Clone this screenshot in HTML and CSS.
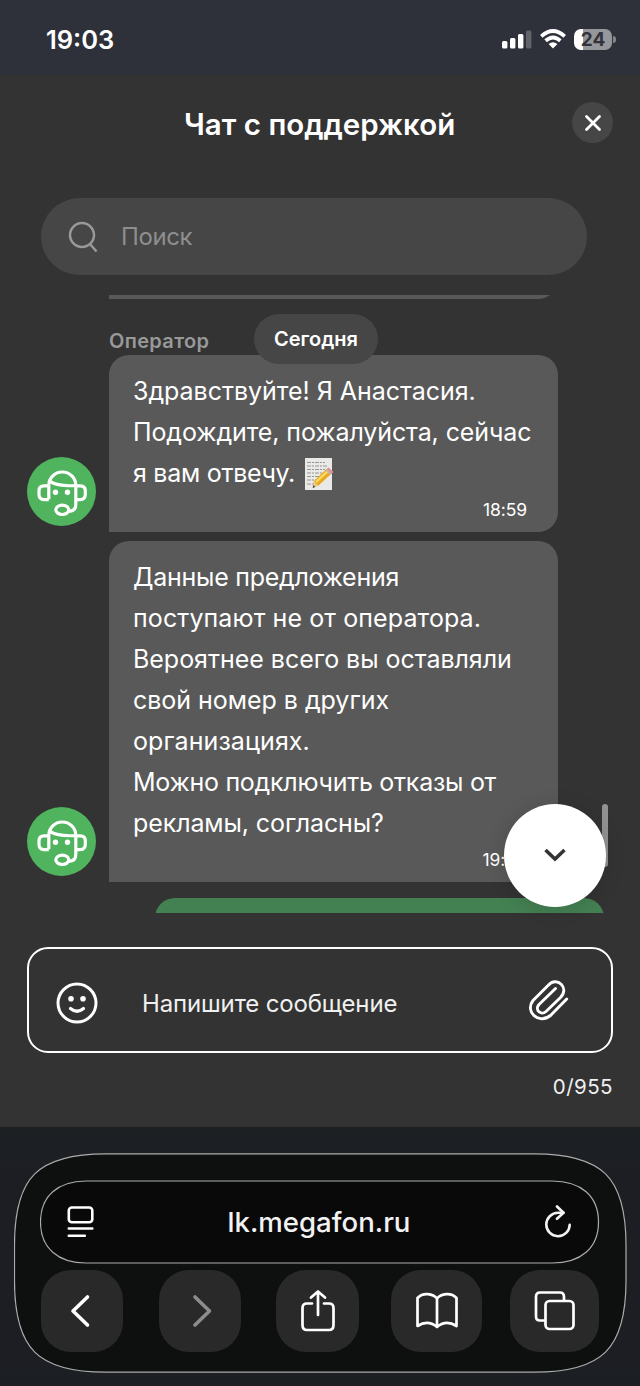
FILE: index.html
```html
<!DOCTYPE html>
<html lang="ru">
<head>
<meta charset="utf-8">
<title>Чат с поддержкой</title>
<link rel="stylesheet" href="styles.css">
</head>
<body>
<svg class="defs" width="0" height="0" aria-hidden="true">
  <symbol id="operator" viewBox="0 0 69 69">
    <circle cx="34.5" cy="34.5" r="34.5" fill="#50b45e"/>
    <g fill="none" stroke="#fff" stroke-width="3.2" stroke-linejoin="round">
      <path d="M21.800 42.300V28.500A13.500 13.500 0 0 1 48.800 28.500V47.500Q48.800 54 42 54.300"/>
      <path d="M22.300 28.800h-5.300q-5 0-5 5v3.800q0 5 5 5h4.800M48.800 28.800h4.500q5 0 5 5v3.800q0 5-5 5h-4.500"/>
      <path d="M23.500 24.700Q31 29.600 48.500 28.600"/>
      <ellipse cx="35.300" cy="52.800" rx="6.500" ry="4.700"/>
    </g>
    <circle cx="28.500" cy="35.300" r="2.700" fill="#fff"/><circle cx="40.500" cy="35.300" r="2.700" fill="#fff"/>
  </symbol>
</svg>
<header class="status">
  <span class="clock">19:03</span>
  <div class="status-icons">
    <svg class="signal" width="30" height="20" viewBox="0 0 30 20"><g fill="#fff"><rect x="0" y="12" width="5.400" height="7.500" rx="1.500"/><rect x="8" y="9" width="5.400" height="10.500" rx="1.500"/><rect x="16" y="5" width="5.400" height="14.500" rx="1.500"/><rect x="24" y="1.500" width="5.400" height="18" rx="1.500" opacity=".25"/></g></svg>
    <svg class="wifi" width="26" height="20" viewBox="0 0 26 20"><g fill="none" stroke="#fff" stroke-width="3.800"><path d="M1.300 7.300Q13-3.300 24.700 7.300"/><path d="M5.600 11.800Q13 5.300 20.400 11.800"/></g><path d="M8.600 15Q13 11.400 17.400 15L13 19.500Z" fill="#fff"/></svg>
    <span class="battery">24</span>
  </div>
</header>
<main class="chat">
  <div class="title-row">
    <h1>Чат с поддержкой</h1>
    <button class="close" aria-label="Закрыть"><svg width="18" height="18" viewBox="0 0 18 18"><path d="M2.500 2.500l13 13M15.500 2.500l-13 13" stroke="#fff" stroke-width="2.800" stroke-linecap="round"/></svg></button>
  </div>
  <div class="search">
    <svg width="32" height="34" viewBox="0 0 32 34"><g fill="none" stroke="#999" stroke-width="2.500"><circle cx="14" cy="15" r="12"/><path d="M22 24l6.500 7.500"/></g></svg>
    <span>Поиск</span>
  </div>
  <section class="feed">
    <div class="previous"></div>
    <div class="author">Оператор</div>
    <div class="day">Сегодня</div>
    <div class="message">
      <svg class="avatar"><use href="#operator"/></svg>
      <div class="bubble first">
        <p>Здравствуйте! Я Анастасия.</p>
        <p class="snug">Подождите, пожалуйста, сейчас</p>
        <p class="with-memo tight">я вам отвечу.
          <svg width="30" height="34" viewBox="0 0 30 34"><path d="M1 1h27v32H1z" fill="#e9e9e7"/><g stroke="#828282" stroke-width=".8" stroke-dasharray="4 1 2 1"><path d="M3 5.500h18M3 9h20M3 12.500h18M3 16h15M3 19.500h12M3 23h10M3 27h7"/></g><path d="M10 24L22.500 12l4.500 5-12.500 11.500-5.500 2z" fill="#eaaa20"/><path d="M12 25L24.500 13.500" stroke="#ffdb65" stroke-width="2.200"/><path d="M22 12.500l2.500-2 5 4.500-3 2.800z" fill="#e78b8b"/><path d="M21.500 13l1.500-1.200 4.500 5-1.500 1.200z" fill="#b7b7b7"/><path d="M10 24l-1.200 6.700 5.500-2z" fill="#e8c790"/><path d="M9.200 28l-.5 3 2.500-1z" fill="#443d37"/></svg>
        </p>
        <time>18:59</time>
      </div>
    </div>
    <div class="message second">
      <svg class="avatar"><use href="#operator"/></svg>
      <div class="bubble">
        <p class="tight">Данные предложения</p>
        <p class="loose">поступают не от оператора.</p>
        <p>Вероятнее всего вы оставляли</p>
        <p>свой номер в других</p>
        <p class="loose">организациях.</p>
        <p class="tight">Можно подключить отказы от</p>
        <p class="snug">рекламы, согласны?</p>
        <time>19:00</time>
      </div>
    </div>
    <div class="reply"></div>
    <div class="scrollbar"></div>
    <button class="down" aria-label="Вниз"><svg width="24" height="16" viewBox="0 0 24 16"><path d="M2.500 3L12 12l9.500-9" fill="none" stroke="#333" stroke-width="3.500"/></svg></button>
  </section>
  <section class="composer">
    <div class="field">
      <svg width="42" height="42" viewBox="0 0 42 42"><circle cx="21" cy="21" r="19" fill="none" stroke="#fff" stroke-width="3"/><g fill="#fff"><circle cx="15" cy="16.800" r="2.800"/><circle cx="27" cy="16.800" r="2.800"/></g><path d="M14.500 26.500Q21 32 27.500 26.500" fill="none" stroke="#fff" stroke-width="3.200" stroke-linecap="round"/></svg>
      <span class="placeholder">Напишите сообщение</span>
      <svg class="clip" width="42" height="44" viewBox="0 0 42 44"><path d="M38.700 21L22.500 37.500C10.500 47 -3.500 33.500 5 22.500L20 7.500C29 -2.500 42 10 32.500 19.500L18 33.500C12.500 38 6.500 31.500 11 26.500L27.500 10.500" fill="none" stroke="#fff" stroke-width="2.900" stroke-linecap="round" stroke-linejoin="round"/></svg>
    </div>
    <div class="counter">0/955</div>
  </section>
</main>
<footer class="browser">
  <div class="toolbar">
    <svg class="outline" viewBox="0 0 613 220" width="613" height="220"><path d="M.5 110V92C.5 24 24 .8 92 .8H520C588 .8 612 24 612 92V128C612 196 588 219.200 520 219.200H92C24 219.200 .5 196 .5 128Z" fill="#0e100f" stroke="#aaadaa" stroke-width="1.200"/></svg>
    <div class="address">
      <svg class="outline" viewBox="0 0 560 84" width="560" height="84"><path d="M.5 42C.5 16 18 1 46 1H512C541 1 558.500 16 558.500 42C558.500 68 541 83 512 83H46C18 83 .5 68 .5 42Z" fill="#090909" stroke="#aaadaa" stroke-width="1.200"/></svg>
      <svg class="reader" width="28" height="32" viewBox="0 0 28 32"><g fill="none" stroke="#fff" stroke-width="2.600" stroke-linecap="round"><rect x="2.800" y="1.500" width="23.500" height="14.700" rx="3"/><path d="M2.800 22.500h23.500M2.800 29.800h16"/></g></svg>
      <span>lk.megafon.ru</span>
      <svg class="reload" width="28" height="34" viewBox="0 0 28 34"><g fill="none" stroke="#f2f2f2" stroke-width="2.600" stroke-linecap="round" stroke-linejoin="round"><path d="M19.500 7.800H14A11.700 11.700 0 1 0 25.700 19.700"/><path d="M13 1.500l6.500 6.300-6.500 6"/></g></svg>
    </div>
    <nav class="buttons">
      <button class="b1"><svg width="36" height="44" viewBox="0 0 36 44"><path d="M23.500 8L9 22l14.500 14" fill="none" stroke="#fff" stroke-width="3.600" stroke-linecap="round" stroke-linejoin="round"/></svg></button>
      <button class="b2"><svg width="36" height="44" viewBox="0 0 36 44"><path d="M13 8l14.500 14-14.500 14" fill="none" stroke="#8d8d8d" stroke-width="3.600" stroke-linecap="round" stroke-linejoin="round"/></svg></button>
      <button class="b3"><svg width="36" height="44" viewBox="0 0 36 44"><g fill="none" stroke="#fff" stroke-width="2.700" stroke-linecap="round" stroke-linejoin="round"><path d="M12 14.500H7q-4.500 0-4.500 4.500V36q0 5 4.500 5h22q4.500 0 4.500-5V19q0-4.500-4.500-4.500h-5"/><path d="M18 26V2.500M11 8.500l7-6 7 6"/></g></svg></button>
      <button class="b4"><svg width="44" height="40" viewBox="0 0 44 40"><g fill="none" stroke="#fff" stroke-width="2.700" stroke-linejoin="round"><path d="M22 7.500C18 2.500 8 1 2.500 7V35Q13 28.500 22 36Q31 28.500 41.500 35V7C36 1 26 2.500 22 7.500V36"/></g></svg></button>
      <button class="b5"><svg width="42" height="42" viewBox="0 0 42 42"><g fill="none" stroke="#fff" stroke-width="2.700"><rect x="11.500" y="11" width="28" height="28" rx="4"/><path d="M11 30.500H6q-4 0-4-4V7q0-4.500 4-4.500h20q4 0 4 4.500v4"/></g></svg></button>
    </nav>
  </div>
</footer>
</body>
</html>
```

FILE: styles.css
```css
* { box-sizing: border-box; }
body {
  margin: 0;
  width: 640px;
  height: 1386px;
  overflow: hidden;
  background: #333;
  color: #fff;
  font-family: Inter, "Noto Sans", sans-serif;
}
h1, p { margin: 0; font-weight: 400; }
button { border: 0; padding: 0; display: flex; align-items: center; justify-content: center; }
svg { display: block; flex: none; }
.defs { position: absolute; }

.status {
  height: 75px;
  padding: 0 25px 0 46px;
  display: flex;
  justify-content: space-between;
  background: #2e313a;
}
.clock { margin-top: 24px; font-size: 25.500px; line-height: 32px; font-weight: 600; }
.status-icons { display: flex; margin-top: 29px; }
.wifi { margin-left: 8px; }
.battery {
  position: relative;
  width: 38px;
  height: 21px;
  margin: 0 3px 0 8px;
  border-radius: 7px;
  background: linear-gradient(90deg, #fff 9px, #96979b 9px);
  color: #32343b;
  font-size: 19px;
  font-weight: 700;
  line-height: 21px;
  text-align: center;
}
.battery::after {
  content: "";
  position: absolute;
  left: 39px;
  top: 7px;
  width: 2.500px;
  height: 7px;
  border-radius: 0 3px 3px 0;
  background: #85868a;
}

.chat { height: 1052px; display: flex; flex-direction: column; background: #333; }
.title-row { height: 123px; padding: 27px 27px 0 184px; display: flex; justify-content: space-between; align-items: flex-start; }
h1 { margin-top: 4px; font-size: 29.500px; line-height: 36px; font-weight: 600; white-space: nowrap; }
.close { width: 41px; height: 41px; border-radius: 50%; background: #464646; }
.search {
  width: 546px;
  height: 77px;
  margin-left: 41px;
  padding-left: 27px;
  display: flex;
  align-items: center;
  gap: 21px;
  border-radius: 39px;
  background: #464646;
  color: #8e8e8e;
  font-size: 24px;
  letter-spacing: -.4px;
}
.feed { position: relative; margin-top: 20px; height: 618px; flex: none; }
.previous { width: 449px; height: 20px; margin: -16px 0 0 109px; border-radius: 0 0 20px 0; background: #595959; clip-path: inset(16px 0 0); }
.author { margin: 30px 0 0 109px; height: 26px; line-height: 25px; font-size: 20px; letter-spacing: .35px; font-weight: 600; color: #999; }
.day {
  position: absolute;
  z-index: 1;
  left: 254px;
  top: 19px;
  width: 124px;
  height: 49.500px;
  border-radius: 25px;
  background: #464646;
  text-align: center;
  font-size: 20px;
  line-height: 50px;
  font-weight: 600;
}
.message { display: flex; align-items: flex-end; margin-left: 27px; }
.message.second { margin-top: 9px; }
.avatar { width: 69px; height: 69px; margin: 0 13px 6px 0; }
.bubble {
  width: 449px;
  height: 341px;
  padding: 16px 20px 0 24px;
  border-radius: 20px 20px 20px 0;
  background: #595959;
  display: flex;
  flex-direction: column;
}
.bubble.first { height: 177px; }
.bubble p { font-size: 25px; line-height: 41px; height: 41px; white-space: nowrap; letter-spacing: -.03px; }
.bubble p.loose { letter-spacing: .1px; }
.bubble p.snug { letter-spacing: -.1px; }
.bubble p.tight { letter-spacing: -.27px; }
.bubble time { align-self: flex-end; margin: 6px 11px 0 0; font-size: 17.500px; line-height: 20px; letter-spacing: -.1px; }
.bubble p.with-memo { display: flex; align-items: center; gap: 9px; }
.reply { width: 449px; height: 40px; margin: 16px 0 0 155px; background: #438052; border-radius: 20px; clip-path: inset(0 0 25px); }
.scrollbar { position: absolute; left: 602px; top: 509px; width: 6px; height: 63px; border-radius: 3px; background: #929292; }
.down { position: absolute; left: 503.500px; top: 508.500px; width: 102px; height: 103px; border-radius: 50%; background: #fff; box-shadow: 0 2px 20px rgba(0, 0, 0, .14); }
.composer { padding: 34px 27px 0; }
.field { height: 106px; border: 2px solid #fff; border-radius: 21px; display: flex; align-items: center; padding: 6px 41px 0 27px; }
.placeholder { margin-left: 44px; font-size: 24px; letter-spacing: -.15px; color: #f0f0f0; white-space: nowrap; }
.clip { margin: -7px 0 0 auto; }
.counter { margin-top: 22px; text-align: right; font-size: 20.500px; letter-spacing: .45px; line-height: 24px; color: #f0f0f0; }

.browser { height: 259px; padding: 26px 0 0 14px; background: linear-gradient(#1c2023, #1d1e24 22%, #1d1e24 85%, #1b1f22); }
.toolbar { position: relative; width: 613px; height: 220px; padding: 27px 0 0 26px; }
.outline { position: absolute; left: 0; top: 0; }
.address { position: relative; width: 560px; height: 84px; display: flex; align-items: center; padding: 0 28px 0 26px; justify-content: space-between; font-size: 27.600px; font-weight: 500; color: #f2f2f2; }
.address > :not(.outline) { position: relative; }
.buttons { position: relative; margin: 6px 0 0 1px; display: flex; }
.buttons button { width: 82px; height: 82px; border-radius: 30px; background: #292929; }
.buttons .b2 { margin-left: 36px; }
.buttons .b3 { width: 83px; margin-left: 35px; }
.buttons .b4 { width: 91px; margin-left: 32px; }
.buttons .b5 { width: 89px; margin-left: 28px; }
```
